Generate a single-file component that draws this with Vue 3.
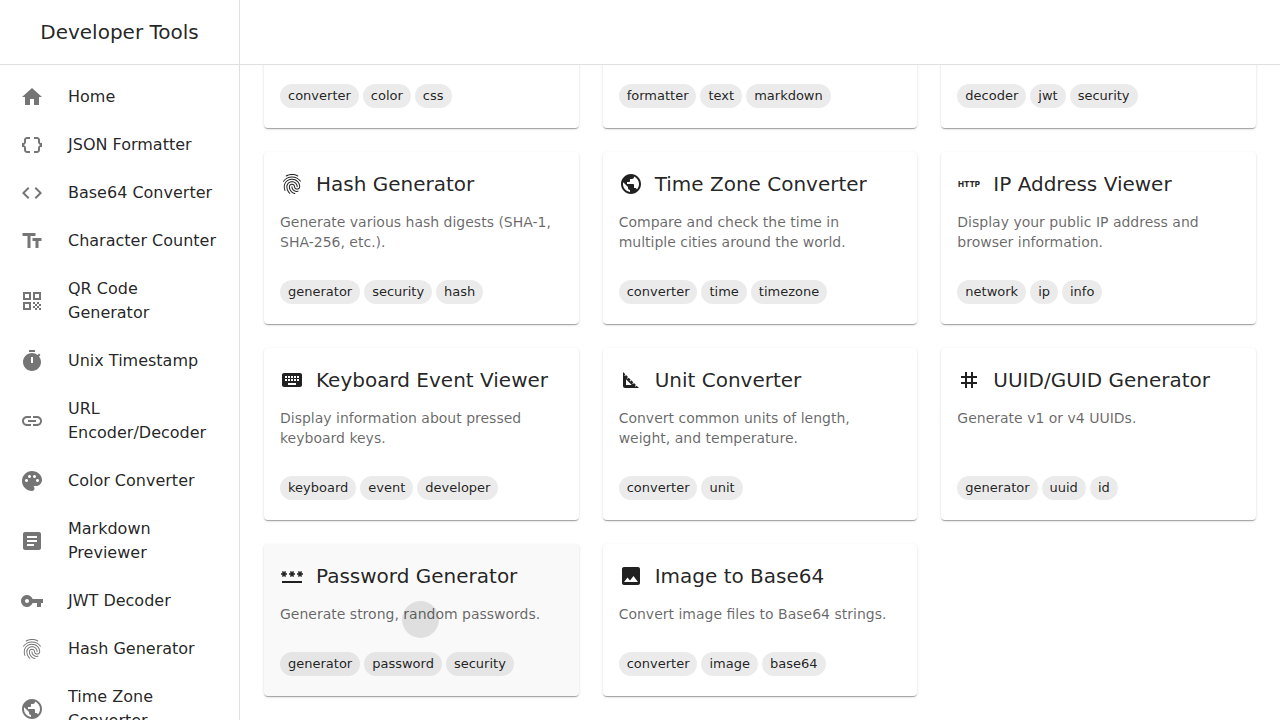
<script setup>
const icons = {
  home: 'M10 20v-6h4v6h5v-8h3L12 3 2 12h3v8z',
  braces: 'M4 7v2c0 .55-.45 1-1 1H2v4h1c.55 0 1 .45 1 1v2c0 1.65 1.35 3 3 3h3v-2H7c-.55 0-1-.45-1-1v-2c0-1.3-.84-2.42-2-2.83v-.34C5.16 11.42 6 10.3 6 9V7c0-.55.45-1 1-1h3V4H7C5.35 4 4 5.35 4 7zm17 3c-.55 0-1-.45-1-1V7c0-1.65-1.35-3-3-3h-3v2h3c.55 0 1 .45 1 1v2c0 1.3.84 2.42 2 2.83v.34c-1.16.41-2 1.52-2 2.83v2c0 .55-.45 1-1 1h-3v2h3c1.65 0 3-1.35 3-3v-2c0-.55.45-1 1-1h1v-4h-1z',
  code: 'M9.4 16.6 4.8 12l4.6-4.6L8 6l-6 6 6 6 1.4-1.4zm5.2 0 4.6-4.6-4.6-4.6L16 6l6 6-6 6-1.4-1.4z',
  textSize: 'M2.5 4v3h5v12h3V7h5V4h-13zm19 5h-9v3h3v7h3v-7h3V9z',
  qr: 'M3 11h8V3H3v8zm2-6h4v4H5V5zM3 21h8v-8H3v8zm2-6h4v4H5v-4zM13 3v8h8V3h-8zm6 6h-4V5h4v4zM19 19h2v2h-2zM13 13h2v2h-2zM15 15h2v2h-2zM13 17h2v2h-2zM15 19h2v2h-2zM17 17h2v2h-2zM17 13h2v2h-2zM19 15h2v2h-2z',
  timer: 'M9 1h6v2H9zM19.03 7.39l1.42-1.42c-.43-.51-.9-.99-1.41-1.41l-1.42 1.42C16.07 4.74 14.12 4 12 4c-4.97 0-9 4.03-9 9s4.02 9 9 9 9-4.03 9-9c0-2.12-.74-4.07-1.97-5.61zM13 14h-2V8h2v6z',
  link: 'M3.9 12c0-1.71 1.39-3.1 3.1-3.1h4V7H7c-2.76 0-5 2.24-5 5s2.24 5 5 5h4v-1.9H7c-1.71 0-3.1-1.39-3.1-3.1zM8 13h8v-2H8v2zm9-6h-4v1.9h4c1.71 0 3.1 1.39 3.1 3.1s-1.39 3.1-3.1 3.1h-4V17h4c2.76 0 5-2.24 5-5s-2.24-5-5-5z',
  palette: 'M12 2C6.49 2 2 6.49 2 12s4.49 10 10 10c1.38 0 2.5-1.12 2.5-2.5 0-.61-.23-1.2-.64-1.67-.08-.1-.13-.21-.13-.33 0-.28.22-.5.5-.5H16c3.31 0 6-2.69 6-6 0-4.96-4.49-9-10-9zm5.5 11c-.83 0-1.5-.67-1.5-1.5s.67-1.5 1.5-1.5 1.5.67 1.5 1.5-.67 1.5-1.5 1.5zm-3-4c-.83 0-1.5-.67-1.5-1.5S13.67 6 14.5 6s1.5.67 1.5 1.5S15.33 9 14.5 9zM5 11.5c0-.83.67-1.5 1.5-1.5s1.5.67 1.5 1.5S7.33 13 6.5 13 5 12.33 5 11.5zm6-4c0 .83-.67 1.5-1.5 1.5S8 8.33 8 7.5 8.67 6 9.5 6s1.5.67 1.5 1.5z',
  article: 'M19 3H5c-1.1 0-2 .9-2 2v14c0 1.1.9 2 2 2h14c1.1 0 2-.9 2-2V5c0-1.1-.9-2-2-2zm-5 14H7v-2h7v2zm3-4H7v-2h10v2zm0-4H7V7h10v2z',
  key: 'M12.65 10C11.83 7.67 9.61 6 7 6c-3.31 0-6 2.69-6 6s2.69 6 6 6c2.61 0 4.83-1.67 5.65-4H17v4h4v-4h2v-4H12.65zM7 14c-1.1 0-2-.9-2-2s.9-2 2-2 2 .9 2 2-.9 2-2 2z',
  fingerprint: 'M17.81 4.47c-.08 0-.16-.02-.23-.06C15.66 3.42 14 3 12.01 3c-1.98 0-3.86.47-5.57 1.41-.24.13-.54.04-.68-.2-.13-.24-.04-.55.2-.68C7.82 2.52 9.86 2 12.01 2c2.13 0 3.99.47 6.03 1.52.25.13.34.43.21.67-.09.18-.26.28-.44.28zM3.5 9.72c-.1 0-.2-.03-.29-.09-.23-.16-.28-.47-.12-.7.99-1.4 2.25-2.5 3.75-3.27C9.98 4.04 14 4.03 17.15 5.65c1.5.77 2.76 1.86 3.75 3.25.16.22.11.54-.12.7-.23.16-.54.11-.7-.12-.9-1.26-2.04-2.25-3.39-2.94-2.87-1.47-6.54-1.47-9.4.01-1.36.7-2.5 1.7-3.4 2.96-.08.14-.23.21-.39.21zm6.25 12.07c-.13 0-.26-.05-.35-.15-.87-.87-1.34-1.43-2.01-2.64-.69-1.23-1.05-2.73-1.05-4.34 0-2.97 2.54-5.39 5.66-5.39s5.66 2.42 5.66 5.39c0 .28-.22.5-.5.5s-.5-.22-.5-.5c0-2.42-2.09-4.39-4.66-4.39-2.57 0-4.66 1.97-4.66 4.39 0 1.44.32 2.77.93 3.85.64 1.15 1.08 1.64 1.85 2.42.19.2.19.51 0 .71-.11.1-.24.15-.37.15zm7.17-1.85c-1.19 0-2.24-.3-3.1-.89-1.49-1.01-2.38-2.65-2.38-4.39 0-.28.22-.5.5-.5s.5.22.5.5c0 1.41.72 2.74 1.94 3.56.71.48 1.54.71 2.54.71.24 0 .64-.03 1.04-.1.27-.05.53.13.58.41.05.27-.13.53-.41.58-.57.11-1.07.12-1.21.12zM14.91 22c-.04 0-.09-.01-.13-.02-1.59-.44-2.63-1.03-3.72-2.1-1.4-1.39-2.17-3.24-2.17-5.22 0-1.62 1.38-2.94 3.08-2.94 1.7 0 3.08 1.32 3.08 2.94 0 1.07.93 1.94 2.08 1.94s2.08-.87 2.08-1.94c0-3.77-3.25-6.83-7.25-6.83-2.84 0-5.44 1.58-6.61 4.03-.39.81-.59 1.76-.59 2.8 0 .78.07 2.01.67 3.61.1.26-.03.55-.29.64-.26.1-.55-.04-.64-.29-.49-1.31-.73-2.61-.73-3.96 0-1.2.23-2.29.68-3.24 1.33-2.79 4.28-4.6 7.51-4.6 4.55 0 8.25 3.51 8.25 7.83 0 1.62-1.38 2.94-3.08 2.94s-3.08-1.32-3.08-2.94c0-1.07-.93-1.94-2.08-1.94s-2.08.87-2.08 1.94c0 1.71.66 3.31 1.87 4.51.95.94 1.86 1.46 3.27 1.85.27.07.42.35.35.61-.05.23-.26.38-.47.38z',
  globe: 'M12 2C6.48 2 2 6.48 2 12s4.48 10 10 10 10-4.48 10-10S17.52 2 12 2zm-1 17.93c-3.95-.49-7-3.85-7-7.93 0-.62.08-1.21.21-1.79L9 15v1c0 1.1.9 2 2 2v1.93zm6.9-2.54c-.26-.81-1-1.39-1.9-1.39h-1v-3c0-.55-.45-1-1-1H8v-2h2c.55 0 1-.45 1-1V7h2c1.1 0 2-.9 2-2v-.41c2.93 1.19 5 4.06 5 7.41 0 2.08-.8 3.97-2.1 5.39z',
  keyboard: 'M20 5H4c-1.1 0-1.99.9-1.99 2L2 17c0 1.1.9 2 2 2h16c1.1 0 2-.9 2-2V7c0-1.1-.9-2-2-2zm-9 3h2v2h-2V8zm0 3h2v2h-2v-2zM8 8h2v2H8V8zm0 3h2v2H8v-2zm-1 2H5v-2h2v2zm0-3H5V8h2v2zm9 7H8v-2h8v2zm0-4h-2v-2h2v2zm0-3h-2V8h2v2zm3 3h-2v-2h2v2zm0-3h-2V8h2v2z',
  setSquare: 'm17.66 17.66-1.06 1.06-.71-.71 1.06-1.06-1.94-1.94-1.06 1.06-.71-.71 1.06-1.06-1.94-1.94-1.06 1.06-.71-.71 1.06-1.06L9.7 9.7l-1.06 1.06-.71-.71 1.06-1.06-1.94-1.94-1.06 1.06-.71-.71 1.06-1.06L4 4v14c0 1.1.9 2 2 2h14l-2.34-2.34zM7 17v-5.76L12.76 17H7z',
  hash: 'M20 10V8h-4V4h-2v4h-4V4H8v4H4v2h4v4H4v2h4v4h2v-4h4v4h2v-4h4v-2h-4v-4h4zm-6 4h-4v-4h4v4z',
  password: 'M2 17h20v2H2v-2zm1.15-4.05L4 11.47l.85 1.48 1.3-.75-.85-1.48H7v-1.5H5.3l.85-1.47L4.85 7 4 8.47 3.15 7l-1.3.75.85 1.47H1v1.5h1.7l-.85 1.48 1.3.75zm6.7-.75 1.3.75.85-1.48.85 1.48 1.3-.75-.85-1.48H15v-1.5h-1.7l.85-1.47-1.3-.75L12 8.47 11.15 7l-1.3.75.85 1.47H9v1.5h1.7l-.85 1.48zM23 9.22h-1.7l.85-1.47-1.3-.75L20 8.47 19.15 7l-1.3.75.85 1.47H17v1.5h1.7l-.85 1.48 1.3.75.85-1.48.85 1.48 1.3-.75-.85-1.48H23v-1.5z',
  image: 'M21 19V5c0-1.1-.9-2-2-2H5c-1.1 0-2 .9-2 2v14c0 1.1.9 2 2 2h14c1.1 0 2-.9 2-2zM8.5 13.5l2.5 3.01L14.5 12l4.5 6H5l3.5-4.5z',
}

const nav = [
  { label: 'Home', icon: 'home' },
  { label: 'JSON Formatter', icon: 'braces' },
  { label: 'Base64 Converter', icon: 'code' },
  { label: 'Character Counter', icon: 'textSize' },
  { label: 'QR Code Generator', icon: 'qr' },
  { label: 'Unix Timestamp', icon: 'timer' },
  { label: 'URL Encoder/Decoder', icon: 'link' },
  { label: 'Color Converter', icon: 'palette' },
  { label: 'Markdown Previewer', icon: 'article' },
  { label: 'JWT Decoder', icon: 'key' },
  { label: 'Hash Generator', icon: 'fingerprint' },
  { label: 'Time Zone Converter', icon: 'globe' },
]

const cards = [
  { tags: ['converter', 'color', 'css'] },
  { tags: ['formatter', 'text', 'markdown'] },
  { tags: ['decoder', 'jwt', 'security'] },
  { title: 'Hash Generator', icon: 'fingerprint', text: 'Generate various hash digests (SHA-1, SHA-256, etc.).', tags: ['generator', 'security', 'hash'] },
  { title: 'Time Zone Converter', icon: 'globe', text: 'Compare and check the time in multiple cities around the world.', tags: ['converter', 'time', 'timezone'] },
  { title: 'IP Address Viewer', icon: 'http', text: 'Display your public IP address and browser information.', tags: ['network', 'ip', 'info'] },
  { title: 'Keyboard Event Viewer', icon: 'keyboard', text: 'Display information about pressed keyboard keys.', tags: ['keyboard', 'event', 'developer'] },
  { title: 'Unit Converter', icon: 'setSquare', text: 'Convert common units of length, weight, and temperature.', tags: ['converter', 'unit'] },
  { title: 'UUID/GUID Generator', icon: 'hash', text: 'Generate v1 or v4 UUIDs.', tags: ['generator', 'uuid', 'id'] },
  { title: 'Password Generator', icon: 'password', text: 'Generate strong, random passwords.', tags: ['generator', 'password', 'security'], pressed: true },
  { title: 'Image to Base64', icon: 'image', text: 'Convert image files to Base64 strings.', tags: ['converter', 'image', 'base64'] },
]
</script>

<template>
  <div class="app">
    <aside class="sidebar">
      <div class="brand">Developer Tools</div>
      <nav class="nav">
        <a v-for="item in nav" :key="item.label" class="nav-item" href="#">
          <svg class="icon" viewBox="0 0 24 24" aria-hidden="true"><path :d="icons[item.icon]" /></svg>
          <span class="nav-label">{{ item.label }}</span>
        </a>
      </nav>
    </aside>
    <div class="page">
      <header class="topbar"></header>
      <main class="content">
        <div class="grid">
          <a
            v-for="(card, i) in cards"
            :key="i"
            class="card"
            :class="{ pressed: card.pressed, partial: !card.title }"
            href="#"
          >
            <template v-if="card.title">
              <h2 class="title">
                <svg class="icon" viewBox="0 0 24 24" aria-hidden="true">
                  <text v-if="card.icon === 'http'" class="http" x="12" y="15" text-anchor="middle">HTTP</text>
                  <path v-else :d="icons[card.icon]" />
                </svg>
                <span>{{ card.title }}</span>
              </h2>
              <p class="text">{{ card.text }}</p>
            </template>
            <span class="tags">
              <span v-for="tag in card.tags" :key="tag" class="tag">{{ tag }}</span>
            </span>
            <span v-if="card.pressed" class="ripple"></span>
          </a>
        </div>
      </main>
    </div>
  </div>
</template>

<style>
body {
  margin: 0;
  background: #fff;
}
</style>

<style scoped>
.app {
  display: flex;
  height: 100vh;
  overflow: hidden;
  color: rgba(0, 0, 0, 0.87);
  font-family: "DejaVu Sans", sans-serif;
  font-size: 16px;
  line-height: 24px;
}
a {
  color: inherit;
  text-decoration: none;
}
.icon {
  flex: none;
  width: 24px;
  height: 24px;
  fill: currentColor;
}
.sidebar {
  box-sizing: border-box;
  flex: none;
  width: 240px;
  border-right: 1px solid #e0e0e0;
  overflow-y: auto;
  scrollbar-width: none;
}
.brand,
.topbar {
  display: flex;
  flex: none;
  align-items: center;
  justify-content: center;
  height: 64px;
  border-bottom: 1px solid #e0e0e0;
}
.brand {
  font-size: 20px;
}
.nav {
  padding: 8px 0;
}
.nav-item {
  display: flex;
  align-items: center;
  gap: 24px;
  padding: 12px 20px;
}
.nav-item .icon {
  color: rgba(0, 0, 0, 0.54);
}
.page {
  display: flex;
  flex: 1;
  flex-direction: column;
  min-width: 0;
}
.content {
  display: flex;
  flex: 1;
  flex-direction: column;
  justify-content: flex-end;
  min-height: 0;
  padding: 0 24px 24px;
  overflow: hidden;
}
.grid {
  display: grid;
  grid-template-columns: repeat(3, minmax(0, 1fr));
  gap: 24px;
}
.card {
  position: relative;
  display: flex;
  flex-direction: column;
  box-sizing: border-box;
  padding: 16px 16px 20px;
  border-radius: 4px;
  background: #fff;
  box-shadow:
    0 2px 1px -1px rgba(0, 0, 0, 0.2),
    0 1px 1px rgba(0, 0, 0, 0.14),
    0 1px 3px rgba(0, 0, 0, 0.12);
  overflow: hidden;
}
.partial {
  min-height: 172px;
}
.pressed::before {
  content: "";
  position: absolute;
  inset: 0;
  background: rgba(0, 0, 0, 0.025);
}
.title {
  display: flex;
  align-items: center;
  gap: 12px;
  margin: 0 0 12px;
  font-size: 20px;
  font-weight: 400;
  line-height: 32px;
}
.http {
  font-family: Inter, "Liberation Sans", sans-serif;
  font-size: 8px;
  font-weight: 800;
}
.text {
  margin: 0 0 28px;
  padding-right: 8px;
  color: rgba(0, 0, 0, 0.6);
  font-size: 14px;
  line-height: 20px;
}
.tags {
  display: flex;
  flex-wrap: wrap;
  gap: 4px;
  margin-top: auto;
}
.tag {
  padding: 0 8px;
  border-radius: 12px;
  background: rgba(0, 0, 0, 0.08);
  font-size: 13px;
  line-height: 24px;
}
.ripple {
  position: absolute;
  top: 57px;
  left: 138px;
  width: 37px;
  height: 37px;
  border-radius: 50%;
  background: rgba(0, 0, 0, 0.1);
}
</style>
